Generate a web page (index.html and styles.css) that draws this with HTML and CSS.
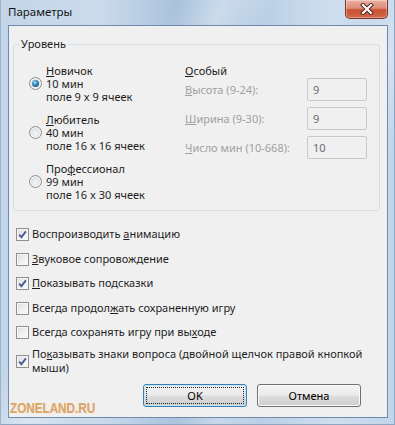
FILE: index.html
```html
<!DOCTYPE html>
<html lang="ru">
<head>
  <meta charset="UTF-8"/>
  <title>Параметры</title>
  <link rel="stylesheet" href="styles.css">
</head>
<body>
<div class="window">
  <div class="titlebar">
    <span class="title">Параметры</span>
    <div class="close">
      <svg width="14" height="12" viewBox="0 0 14 12">
        <path d="M3 2 L11 10 M11 2 L3 10" stroke="#4a2018" stroke-width="4" stroke-linecap="square"/>
        <path d="M3 2 L11 10 M11 2 L3 10" stroke="#ffffff" stroke-width="2.2" stroke-linecap="square"/>
      </svg>
    </div>
  </div>

  <div class="client">
    <fieldset class="group">
      <legend>Уровень</legend>
      <div class="levels">
        <div class="presets">
          <div class="level">
            <span class="radio checked"></span>
            <div class="level-text">
              <span><u>Н</u>овичок</span>
              <span>10 мин</span>
              <span>поле 9 x 9 ячеек</span>
            </div>
          </div>
          <div class="level">
            <span class="radio"></span>
            <div class="level-text">
              <span><u>Л</u>юбитель</span>
              <span>40 мин</span>
              <span>поле 16 x 16 ячеек</span>
            </div>
          </div>
          <div class="level">
            <span class="radio"></span>
            <div class="level-text">
              <span>Про<u>ф</u>ессионал</span>
              <span>99 мин</span>
              <span>поле 16 x 30 ячеек</span>
            </div>
          </div>
        </div>

        <div class="custom">
          <div class="custom-title"><u>О</u>собый</div>
          <div class="fields">
            <div class="field"><span class="field-label"><u>В</u>ысота (9-24):</span><span class="textbox">9</span></div>
            <div class="field"><span class="field-label"><u>Ш</u>ирина (9-30):</span><span class="textbox">9</span></div>
            <div class="field"><span class="field-label"><u>Ч</u>исло мин (10-668):</span><span class="textbox">10</span></div>
          </div>
        </div>
      </div>
    </fieldset>

    <div class="options">
      <div class="option"><span class="check checked"></span><span>Воспроизводить <u>а</u>нимацию</span></div>
      <div class="option"><span class="check"></span><span><u>З</u>вуковое сопровождение</span></div>
      <div class="option"><span class="check checked"></span><span><u>П</u>оказывать подсказки</span></div>
      <div class="option"><span class="check"></span><span>Всегда продол<u>ж</u>ать сохраненную игру</span></div>
      <div class="option"><span class="check"></span><span>Всегда сохранять игру при вы<u>х</u>оде</span></div>
      <div class="option option-wide"><span class="check checked"></span><span class="option-long">По<u>к</u>азывать знаки вопроса (двойной щелчок правой кнопкой мыши)</span></div>
    </div>

    <div class="buttons">
      <div class="button default"><span class="focus">OK</span></div>
      <div class="button"><span class="focus-none">Отмена</span></div>
    </div>

    <div class="watermark">ZONELAND.RU</div>
  </div>
</div>
</body>
</html>
```

FILE: styles.css
```css
body {
  margin: 0;
  font-family: "Noto Sans", "Open Sans", sans-serif;
  font-size: 11px;
  color: #1e1e1e;
}
u {
  text-decoration-thickness: 1px;
  text-underline-offset: 1px;
}
.window {
  width: 395px;
  height: 425px;
  box-sizing: border-box;
  padding: 0 6px 6px 7px;
  display: flex;
  flex-direction: column;
  background:
    linear-gradient(115deg, rgba(255,255,255,0) 30%, rgba(255,255,255,0.35) 38%, rgba(255,255,255,0) 46%, rgba(255,255,255,0) 62%, rgba(255,255,255,0.3) 70%, rgba(255,255,255,0) 78%),
    linear-gradient(90deg, #c3d5e8 0%, #cbdbec 25%, #a9c2dc 45%, #b3cae2 60%, #cfdeee 85%, #c2d5ea 100%);
  border-left: 1px solid #9fb4ca;
  border-right: 1px solid #8ea6bf;
  border-bottom: 1px solid #8ea6bf;
}
.titlebar {
  height: 25px;
  display: flex;
  justify-content: space-between;
  align-items: flex-start;
}
.title {
  margin: 4px 0 0 0;
  line-height: 16px;
  color: #151515;
  font-size: 11.5px;
}
.close {
  width: 43px;
  height: 19px;
  box-sizing: border-box;
  border: 1px solid #7b3328;
  border-top: none;
  border-radius: 0 0 5px 5px;
  background: linear-gradient(#eab1a2 0%, #de8c78 45%, #c9502f 55%, #d2684a 100%);
  box-shadow: inset 0 0 0 1px rgba(255,255,255,0.35);
  display: flex;
  align-items: center;
  justify-content: center;
}
.client {
  flex: 1;
  position: relative;
  border: 1px solid #6e8bae;
  background: #f0f0f0;
  padding: 10px 7px 0 4px;
}
.group {
  margin: 0;
  padding: 12px 0 9px 0;
  border: 1px solid #d5dfe5;
  border-radius: 3px;
}
.group legend {
  margin-left: 5px;
  padding: 0 2px;
  line-height: 16px;
}
.levels {
  display: flex;
  padding-left: 15px;
}
.presets {
  width: 156px;
  display: flex;
  flex-direction: column;
  gap: 10px;
}
.level {
  display: flex;
  align-items: center;
  gap: 4px;
}
.level-text {
  display: flex;
  flex-direction: column;
  line-height: 13px;
}
.radio {
  width: 13px;
  height: 13px;
  box-sizing: border-box;
  border-radius: 50%;
  border: 1px solid #8e8f8f;
  background: radial-gradient(circle at 50% 60%, #f6f6f6 0%, #e2e2e2 60%, #d0d0d0 100%);
  box-shadow: inset 0 0 0 1px #f4f4f4;
  display: flex;
  align-items: center;
  justify-content: center;
}
.radio.checked::before {
  content: "";
  width: 7px;
  height: 7px;
  border-radius: 50%;
  background: radial-gradient(circle at 40% 35%, #b6e6fb 0%, #3b98c6 35%, #1c5a7e 75%, #123c56 100%);
}
.custom {
  display: flex;
  flex-direction: column;
}
.custom-title {
  line-height: 13px;
}
.fields {
  margin-top: 1px;
  display: flex;
  flex-direction: column;
  gap: 6px;
}
.field {
  display: flex;
  align-items: center;
  height: 23px;
}
.field-label {
  width: 122px;
  color: #a0a0a0;
}
.textbox {
  width: 60px;
  height: 23px;
  box-sizing: border-box;
  border: 1px solid #c9c9c9;
  border-radius: 2px;
  padding-left: 5px;
  line-height: 21px;
  color: #6d6d6d;
}
.options {
  margin: 16px 0 0 3px;
  display: flex;
  flex-direction: column;
  gap: 10.5px;
}
.option {
  display: flex;
  align-items: center;
  gap: 3px;
  line-height: 14px;
}
.option-wide {
  margin-top: -2.5px;
  line-height: 13.5px;
}
.option-long {
  width: 345px;
}
.check {
  flex: none;
  width: 13px;
  height: 13px;
  box-sizing: border-box;
  border: 1px solid #8e8f8f;
  background: linear-gradient(135deg, #dcdcdc 0%, #f2f2f2 60%, #fbfbfb 100%);
  box-shadow: inset 0 0 0 1px #f6f6f6;
  margin-top: 1px;
}
.check.checked {
  background:
    url("data:image/svg+xml,%3Csvg xmlns='http://www.w3.org/2000/svg' width='11' height='11'%3E%3Cpath d='M2.2 5.6 L4.4 8.2 L8.9 2.3' fill='none' stroke='%234a5e96' stroke-width='1.9'/%3E%3C/svg%3E") center / 11px 11px no-repeat,
    linear-gradient(135deg, #dcdcdc 0%, #f2f2f2 60%, #fbfbfb 100%);
}
.buttons {
  margin-top: 10px;
  padding-right: 19px;
  display: flex;
  justify-content: flex-end;
  gap: 10px;
}
.button {
  width: 104px;
  height: 23px;
  box-sizing: border-box;
  border: 1px solid #707070;
  border-radius: 3px;
  background: linear-gradient(#f2f2f2 0%, #ebebeb 48%, #dddddd 52%, #cfcfcf 100%);
  box-shadow: inset 0 0 0 1px #fcfcfc;
  padding: 2px;
  display: flex;
  color: #000;
}
.button.default {
  border-color: #3c7fb1;
  box-shadow: inset 0 0 0 1px #bfe3f7;
}
.focus, .focus-none {
  flex: 1;
  display: flex;
  align-items: center;
  justify-content: center;
  border: 1px dotted transparent;
}
.focus {
  border-color: #222;
}
.watermark {
  position: absolute;
  left: 1px;
  bottom: 0;
  font-family: "Liberation Sans", sans-serif;
  font-weight: 700;
  font-size: 15px;
  line-height: 18px;
  color: #dba66b;
  text-shadow: 0 0 1px #f3d2a6;
  transform: scaleX(0.78);
  transform-origin: left bottom;
}
```
